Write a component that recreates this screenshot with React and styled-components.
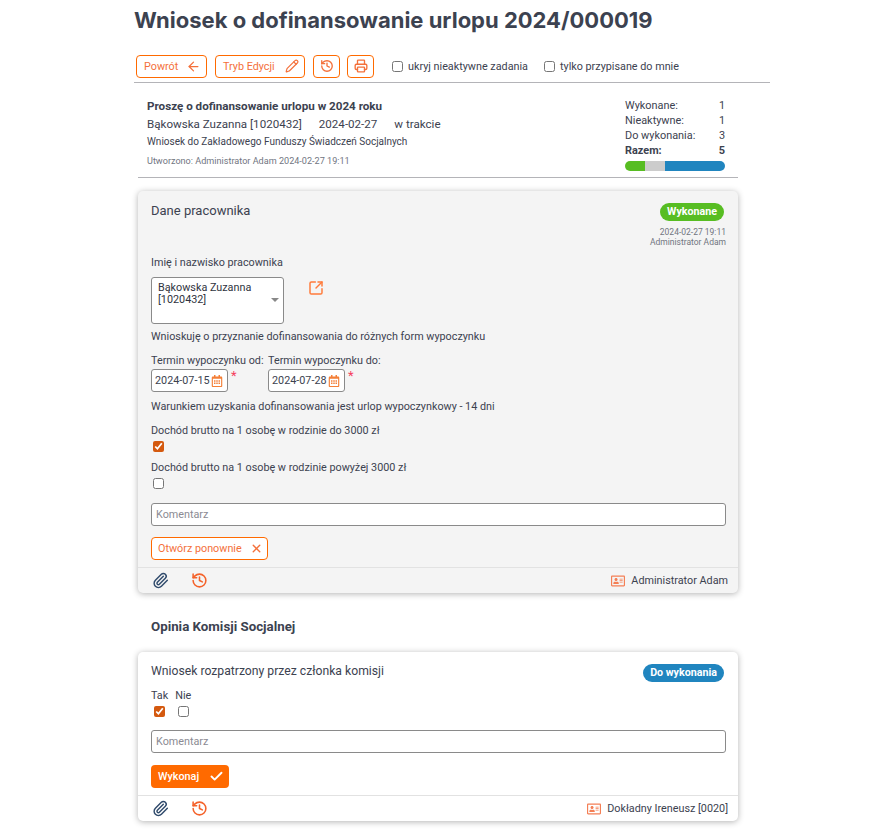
import styled, { createGlobalStyle } from 'styled-components';
import { ArrowLeft, Pencil, History, Printer, SquareArrowOutUpRight, Paperclip, X, Check } from 'lucide-react';
import { FaRegAddressCard, FaRegCalendarAlt } from 'react-icons/fa';

const stats = [
  { id: 1, label: 'Wykonane:', value: 1 },
  { id: 2, label: 'Nieaktywne:', value: 1 },
  { id: 3, label: 'Do wykonania:', value: 3 },
];

const bar = [
  { id: 1, color: '#57bd22', value: 1 },
  { id: 2, color: '#cccccc', value: 1 },
  { id: 3, color: '#2085bf', value: 3 },
];

function CardFooter({ person }) {
  return (
    <Footer>
      <FooterIcons>
        <ClipIcon size={17} strokeWidth={2} />
        <HistoryIcon size={17} strokeWidth={2.2} />
      </FooterIcons>
      <Person>
        <FaRegAddressCard size={14} color="#f47f55" />
        {person}
      </Person>
    </Footer>
  );
}

function DateField({ label, value }) {
  return (
    <DateColumn>
      <DateLabel>{label}</DateLabel>
      <DateRow>
        <DateBox>
          {value}
          <FaRegCalendarAlt size={12} color="#f47f37" />
        </DateBox>
        <Star>*</Star>
      </DateRow>
    </DateColumn>
  );
}

function App() {
  return (
    <Page>
      <GlobalStyle />
      <Title>Wniosek o dofinansowanie urlopu 2024/000019</Title>
      <Toolbar>
        <OutlineButton $width={71}>
          Powrót <ArrowLeft size={15} />
        </OutlineButton>
        <OutlineButton $width={90}>
          Tryb Edycji <Pencil size={14} />
        </OutlineButton>
        <OutlineButton $width={27} $center>
          <History size={14} strokeWidth={2.3} />
        </OutlineButton>
        <PrintButton $width={27} $center>
          <Printer size={14} strokeWidth={2.3} />
        </PrintButton>
        <Filter $left={10}>
          <input type="checkbox" />
          ukryj nieaktywne zadania
        </Filter>
        <Filter $left={8}>
          <input type="checkbox" />
          tylko przypisane do mnie
        </Filter>
      </Toolbar>

      <Summary>
        <SummaryText>
          <SummaryTitle>Proszę o dofinansowanie urlopu w 2024 roku</SummaryTitle>
          <SummaryMeta>
            <span>Bąkowska Zuzanna [1020432]</span>
            <span>2024-02-27</span>
            <span>w trakcie</span>
          </SummaryMeta>
          <SummaryFund>Wniosek do Zakładowego Funduszy Świadczeń Socjalnych</SummaryFund>
          <SummaryCreated>Utworzono: Administrator Adam 2024-02-27 19:11</SummaryCreated>
        </SummaryText>
        <Stats>
          {stats.map(({ id, label, value }) => (
            <StatRow key={id}>
              <span>{label}</span>
              <span>{value}</span>
            </StatRow>
          ))}
          <StatRow $total>
            <span>Razem:</span>
            <span>5</span>
          </StatRow>
          <Progress>
            {bar.map(({ id, color, value }) => (
              <ProgressPart key={id} $color={color} $grow={value} />
            ))}
          </Progress>
        </Stats>
      </Summary>

      <Card $done>
        <CardBody>
          <CardHead>
            <CardTitle>Dane pracownika</CardTitle>
            <CardStatus>
              <Badge $color="#57bd22">Wykonane</Badge>
              <StatusNote>2024-02-27 19:11</StatusNote>
              <StatusNote>Administrator Adam</StatusNote>
            </CardStatus>
          </CardHead>
          <FieldLabel $top={9}>Imię i nazwisko pracownika</FieldLabel>
          <SelectRow>
            <SelectBox>
              Bąkowska Zuzanna [1020432]
              <Caret />
            </SelectBox>
            <OpenIcon size={16} strokeWidth={2.2} />
          </SelectRow>
          <FieldLabel $top={6}>Wnioskuję o przyznanie dofinansowania do różnych form wypoczynku</FieldLabel>
          <DatesRow>
            <DateField label="Termin wypoczynku od:" value="2024-07-15" />
            <DateField label="Termin wypoczynku do:" value="2024-07-28" />
          </DatesRow>
          <FieldLabel $top={8}>Warunkiem uzyskania dofinansowania jest urlop wypoczynkowy - 14 dni</FieldLabel>
          <CheckField $top={11}>
            <FieldLabel>Dochód brutto na 1 osobę w rodzinie do 3000 zł</FieldLabel>
            <input type="checkbox" defaultChecked />
          </CheckField>
          <CheckField $top={9}>
            <FieldLabel>Dochód brutto na 1 osobę w rodzinie powyżej 3000 zł</FieldLabel>
            <input type="checkbox" />
          </CheckField>
          <Comment placeholder="Komentarz" $top={14} />
          <ReopenButton>
            Otwórz ponownie <X size={13} strokeWidth={2.6} />
          </ReopenButton>
        </CardBody>
        <CardFooter person="Administrator Adam" />
      </Card>

      <SectionTitle>Opinia Komisji Socjalnej</SectionTitle>

      <Card>
        <CardBody>
          <CardHead>
            <CardTitle $small>Wniosek rozpatrzony przez członka komisji</CardTitle>
            <CardStatus>
              <Badge $color="#2085bf">Do wykonania</Badge>
            </CardStatus>
          </CardHead>
          <Choices>
            <Choice>
              Tak
              <input type="checkbox" defaultChecked />
            </Choice>
            <Choice>
              Nie
              <input type="checkbox" />
            </Choice>
          </Choices>
          <Comment placeholder="Komentarz" $top={13} />
          <SubmitButton>
            Wykonaj <Check size={15} strokeWidth={3} />
          </SubmitButton>
        </CardBody>
        <CardFooter person="Dokładny Ireneusz [0020]" />
      </Card>
    </Page>
  );
}

const GlobalStyle = createGlobalStyle`
  * {
    box-sizing: border-box;
  }

  body {
    margin: 0;
    background: #fff;
    color: #3c4250;
    font-family: Roboto, "Liberation Sans", sans-serif;
    font-size: 10.8px;
  }

  input[type='checkbox'] {
    margin: 0;
    width: 11px;
    height: 11px;
    accent-color: #d4590f;
  }
`;

const Page = styled.div`
  width: 894px;
  height: 831px;
  overflow: hidden;
  padding-left: 134px;
`;

const Title = styled.h1`
  margin: 0;
  padding-top: 5px;
  height: 55px;
  font-family: Inter, sans-serif;
  font-size: 22px;
  line-height: 30px;
  font-weight: 700;
  color: #3c4250;
`;

const Toolbar = styled.div`
  display: flex;
  align-items: center;
  gap: 8px;
  width: 636px;
  height: 28px;
  padding: 0 0 5px 2px;
  border-bottom: 1px solid #b4b4b8;
`;

const OutlineButton = styled.button`
  display: flex;
  align-items: center;
  justify-content: ${(props) => (props.$center ? 'center' : 'space-between')};
  width: ${(props) => props.$width}px;
  height: 23px;
  padding: ${(props) => (props.$center ? '0' : '0 5px 0 7px')};
  border: 1px solid #ff6a00;
  border-radius: 4px;
  background: #fff;
  color: #f4703a;
  font-family: inherit;
  font-size: 10.8px;
`;

const PrintButton = styled(OutlineButton)`
  margin-left: -1px;
`;

const Filter = styled.label`
  display: flex;
  align-items: center;
  gap: 5px;
  margin-left: ${(props) => props.$left}px;
  font-size: 10.8px;
`;

const Summary = styled.div`
  display: flex;
  justify-content: space-between;
  width: 600px;
  height: 95px;
  margin-left: 4px;
  padding: 16px 13px 0 9px;
  border-bottom: 1px solid #b4b4b8;
`;

const SummaryText = styled.div`
  display: flex;
  flex-direction: column;
`;

const SummaryTitle = styled.div`
  font-size: 11.65px;
  line-height: 15px;
  font-weight: 700;
`;

const SummaryMeta = styled.div`
  display: flex;
  gap: 17px;
  margin-top: 2px;
  font-size: 11.6px;
  line-height: 16px;
`;

const SummaryFund = styled.div`
  margin-top: 3px;
  font-size: 10px;
  line-height: 13px;
`;

const SummaryCreated = styled.div`
  margin-top: 7px;
  font-size: 9.1px;
  line-height: 12px;
  color: #71757f;
`;

const Stats = styled.div`
  width: 100px;
  margin-top: -1px;
`;

const StatRow = styled.div`
  display: flex;
  justify-content: space-between;
  font-size: 10.9px;
  line-height: 15px;
  font-weight: ${(props) => (props.$total ? 700 : 400)};
`;

const Progress = styled.div`
  display: flex;
  height: 10px;
  margin-top: 3px;
  border-radius: 5px;
  overflow: hidden;
`;

const ProgressPart = styled.div`
  flex: ${(props) => props.$grow};
  background: ${(props) => props.$color};
`;

const Card = styled.section`
  width: 600px;
  margin-top: ${(props) => (props.$done ? '13px' : '0')};
  margin-left: 4px;
  border-radius: 5px;
  background: ${(props) => (props.$done ? '#f4f4f4' : '#fff')};
  box-shadow: 0 1px 6px rgba(0, 0, 0, 0.3);
`;

const CardBody = styled.div`
  padding: 12px 12px 7px 13px;
`;

const CardHead = styled.div`
  display: flex;
  justify-content: space-between;
  align-items: flex-start;
`;

const CardTitle = styled.h2`
  margin: 0;
  font-size: ${(props) => (props.$small ? 12.2 : 13)}px;
  line-height: ${(props) => (props.$small ? 14 : 16)}px;
  font-weight: 400;
`;

const CardStatus = styled.div`
  display: flex;
  flex-direction: column;
  align-items: flex-end;
`;

const Badge = styled.span`
  display: block;
  height: 18px;
  margin-bottom: 6px;
  margin-right: 2px;
  padding: 0 7px;
  border-radius: 9px;
  background: ${(props) => props.$color};
  color: #fff;
  font-size: 10.7px;
  line-height: 18px;
  font-weight: 700;
`;

const StatusNote = styled.div`
  font-size: 8.5px;
  line-height: 10px;
  color: #71757f;
`;

const FieldLabel = styled.div`
  margin-top: ${(props) => props.$top || 0}px;
  font-size: 10.8px;
  line-height: 13px;
`;

const SelectRow = styled.div`
  display: flex;
  align-items: flex-start;
  gap: 24px;
  margin-top: 8px;
`;

const OpenIcon = styled(SquareArrowOutUpRight)`
  margin-top: 3px;
  color: #ff7a3a;
`;

const SelectBox = styled.div`
  position: relative;
  width: 133px;
  height: 47px;
  padding: 4px 18px 0 6px;
  border: 1px solid #8a8a8a;
  border-radius: 3px;
  background: #fff;
  font-size: 10.8px;
  line-height: 12px;
  color: #2f3340;
`;

const Caret = styled.span`
  position: absolute;
  top: 20px;
  right: 4px;
  border-top: 4px solid #888;
  border-left: 4px solid transparent;
  border-right: 4px solid transparent;
`;

const DatesRow = styled.div`
  display: flex;
  gap: 4px;
  margin-top: 11px;
`;

const DateColumn = styled.div`
  width: 113px;
`;

const DateLabel = styled.div`
  font-size: 10.8px;
  line-height: 13px;
  white-space: nowrap;
`;

const DateRow = styled.div`
  display: flex;
  gap: 2px;
  margin-top: 2px;
`;

const DateBox = styled.div`
  display: flex;
  align-items: center;
  justify-content: space-between;
  width: 77px;
  height: 23px;
  padding: 0 4px 0 3px;
  border: 1px solid #8a8a8a;
  border-radius: 3px;
  background: #fff;
  font-size: 10.8px;
  white-space: nowrap;
`;

const Star = styled.span`
  margin-left: 1px;
  color: #f5405c;
  font-size: 13px;
  line-height: 13px;
`;

const CheckField = styled.div`
  display: flex;
  flex-direction: column;
  align-items: flex-start;
  gap: 4px;
  margin-top: ${(props) => props.$top}px;

  input {
    margin-left: 2px;
  }
`;

const Comment = styled.input`
  display: block;
  width: 100%;
  height: 23px;
  margin-top: ${(props) => props.$top}px;
  padding: 0 4px;
  border: 1px solid #8a8a8a;
  border-radius: 3px;
  background: #fff;
  font-family: inherit;
  font-size: 10.8px;

  &::placeholder {
    color: #8b8b93;
  }
`;

const ReopenButton = styled.button`
  display: flex;
  align-items: center;
  gap: 8px;
  margin-top: 11px;
  height: 23px;
  padding: 0 4px 0 6px;
  border: 1px solid #ff6a00;
  border-radius: 4px;
  background: #fff;
  color: #f4703a;
  font-family: inherit;
  font-size: 10.8px;
`;

const SubmitButton = styled.button`
  display: flex;
  align-items: center;
  justify-content: space-between;
  width: 78px;
  margin-top: 12px;
  height: 23px;
  padding: 0 5px 0 7px;
  border: 0;
  border-radius: 4px;
  background: #ff6a00;
  color: #fff;
  font-family: inherit;
  font-size: 10.8px;
  font-weight: 500;
`;

const Footer = styled.footer`
  display: flex;
  align-items: center;
  justify-content: space-between;
  height: 26px;
  padding: 0 10px 0 14px;
  border-top: 1px solid #e2e2e2;
`;

const FooterIcons = styled.div`
  display: flex;
  align-items: center;
  gap: 22px;
`;

const ClipIcon = styled(Paperclip)`
  color: #2f4a6b;
`;

const HistoryIcon = styled(History)`
  color: #f4622a;
`;

const Person = styled.div`
  display: flex;
  align-items: center;
  gap: 6px;
  font-size: 10.8px;
`;

const SectionTitle = styled.h3`
  margin: 0;
  width: 600px;
  height: 59px;
  padding: 26px 0 0 17px;
  font-size: 13.3px;
  line-height: 16px;
  font-weight: 700;
`;

const Choices = styled.div`
  display: flex;
  gap: 7px;
  margin-top: 1px;
`;

const Choice = styled.label`
  display: flex;
  flex-direction: column;
  align-items: center;
  gap: 4px;
  font-size: 10.8px;
  line-height: 13px;
`;

export default App;
